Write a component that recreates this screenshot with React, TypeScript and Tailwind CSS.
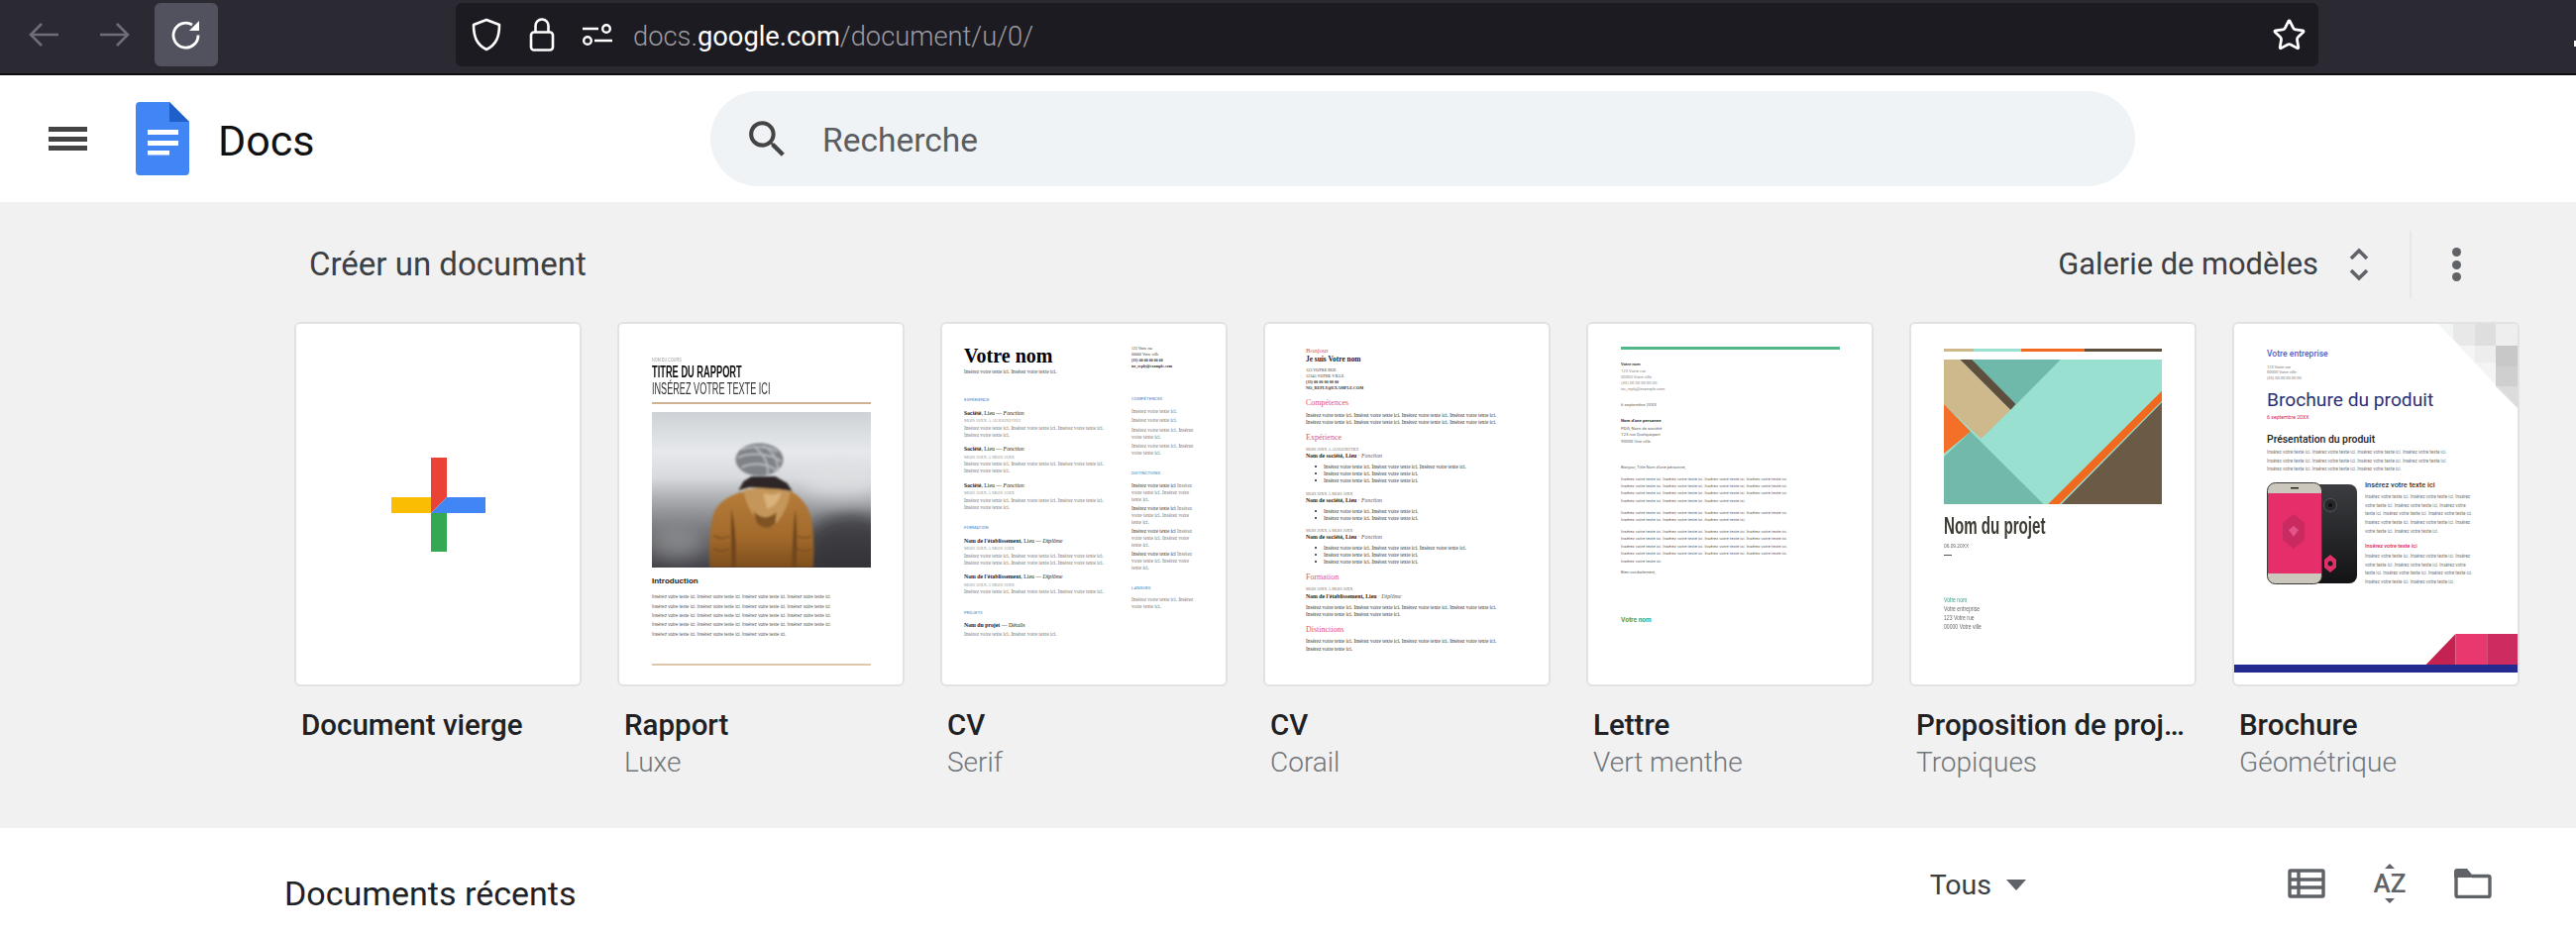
import React from "react";
import { Star } from "lucide-react";

const T = "Insérez votre texte ici. ";
const rep = (n: number) => T.repeat(n).trim();

function R({ c, children }: { c: string; children?: React.ReactNode }) {
  return <p className={`whitespace-nowrap ${c}`}>{children}</p>;
}

const serif = "[font-family:'Liberation_Serif',serif]";

const sBase = "h-[7px] leading-[7px] text-[5.2px] " + serif;
const sTxt = sBase + " text-[#777]";
const sHead = "h-[7px] leading-[7px] text-[4.4px] text-[#3d85c6] font-['Roboto']";
const sBold = "h-[7px] leading-[7px] text-[5.8px] text-[#222] " + serif;
const sDate = "h-[7px] leading-[7px] text-[4.4px] text-[#999] " + serif;

function Job({ a, b, c }: { a: string; b: string; c: string }) {
  return (
    <R c={`${sBold} ${c}`}>
      <b>{a}</b>, Lieu — <i>{b}</i>
    </R>
  );
}

function CvSerif() {
  return (
    <div className="flex pl-[22px] pt-[20px]">
      <div className="w-[143px] shrink-0">
        <R c={`h-[24px] text-[20px] leading-[24px] font-bold text-black ${serif}`}>Votre nom</R>
        <R c={`${sBase} mt-[1px] text-[#444]`}>Insérez votre texte ici. Insérez votre texte ici.</R>
        <R c={`${sHead} mt-[21px]`}>EXPÉRIENCE</R>
        <Job a="Société" b="Fonction" c="mt-[7px]" />
        <R c={sDate}>MOIS 20XX À AUJOURD'HUI</R>
        <R c={`${sTxt} mt-[1px]`}>{rep(3)}</R>
        <R c={sTxt}>Insérez votre texte ici.</R>
        <Job a="Société" b="Fonction" c="mt-[7px]" />
        <R c={`${sDate} mt-[1px]`}>MOIS 20XX À MOIS 20XX</R>
        <R c={sTxt}>{rep(3)}</R>
        <R c={sTxt}>Insérez votre texte ici.</R>
        <Job a="Société" b="Fonction" c="mt-[8px]" />
        <R c={sDate}>MOIS 20XX À MOIS 20XX</R>
        <R c={`${sTxt} mt-[1px]`}>{rep(3)}</R>
        <R c={sTxt}>Insérez votre texte ici.</R>
        <R c={`${sHead} mt-[13px]`}>FORMATION</R>
        <Job a="Nom de l'établissement" b="Diplôme" c="mt-[7px]" />
        <R c={sDate}>MOIS 20XX À MOIS 20XX</R>
        <R c={`${sTxt} mt-[1px]`}>{rep(3)}</R>
        <R c={sTxt}>{rep(3)}</R>
        <Job a="Nom de l'établissement" b="Diplôme" c="mt-[7px]" />
        <R c={`${sDate} mt-[1px]`}>MOIS 20XX À MOIS 20XX</R>
        <R c={sTxt}>{rep(3)}</R>
        <R c={`${sHead} mt-[14px]`}>PROJETS</R>
        <R c={`${sBold} mt-[6px]`}>
          <b>Nom du projet</b> — Détails
        </R>
        <R c={`${sTxt} mt-[2px]`}>{rep(2)}</R>
      </div>
      <div className="ml-[26px] w-[70px] shrink-0 overflow-hidden">
        <div className={`mt-[2px] text-[4px] leading-[6px] text-[#333] ${serif}`}>
          <p>123 Votre rue</p>
          <p>00000 Votre ville</p>
          <p className="font-bold">(33) 00 00 00 00 00</p>
          <p className="font-bold">no_reply@example.com</p>
        </div>
        <R c={`${sHead} mt-[26px]`}>COMPÉTENCES</R>
        <R c={`${sTxt} mt-[6px]`}>Insérez votre texte ici.</R>
        <R c={`${sTxt} mt-[2px]`}>Insérez votre texte ici.</R>
        <R c={`${sTxt} mt-[3px]`}>Insérez votre texte ici. Insérez</R>
        <R c={sTxt}>votre texte ici.</R>
        <R c={`${sTxt} mt-[2px]`}>Insérez votre texte ici. Insérez</R>
        <R c={sTxt}>votre texte ici.</R>
        <R c={`${sHead} mt-[13px]`}>DISTINCTIONS</R>
        <R c={`${sTxt} mt-[6px]`}><span className="text-[#333]">Insérez votre texte ici</span> Insérez</R>
        <R c={sTxt}>votre texte ici. Insérez votre</R>
        <R c={sTxt}>texte ici.</R>
        <R c={`${sTxt} mt-[2px]`}><span className="text-[#333]">Insérez votre texte ici</span> Insérez</R>
        <R c={sTxt}>votre texte ici. Insérez votre</R>
        <R c={sTxt}>texte ici.</R>
        <R c={`${sTxt} mt-[2px]`}><span className="text-[#333]">Insérez votre texte ici</span> Insérez</R>
        <R c={sTxt}>votre texte ici. Insérez votre</R>
        <R c={sTxt}>texte ici.</R>
        <R c={`${sTxt} mt-[2px]`}><span className="text-[#333]">Insérez votre texte ici</span> Insérez</R>
        <R c={sTxt}>votre texte ici. Insérez votre</R>
        <R c={sTxt}>texte ici.</R>
        <R c={`${sHead} mt-[13px]`}>LANGUES</R>
        <R c={`${sTxt} mt-[5px]`}>Insérez votre texte ici. Insérez</R>
        <R c={sTxt}>votre texte ici.</R>
      </div>
    </div>
  );
}

const cH = `h-[8px] text-[8px] leading-[8px] text-[#e0566f] ${serif}`;
const cT = `h-[7px] text-[5.3px] leading-[7px] text-[#333] ${serif}`;
const cB = `h-[7px] text-[5.8px] leading-[7px] text-[#222] ${serif}`;
const cD = `h-[7px] text-[4.1px] leading-[7px] text-[#777] ${serif}`;
const cL = `flex h-[7px] items-center text-[5.3px] leading-[7px] text-[#333] ${serif}`;

function Bul({ n, c }: { n: number; c?: string }) {
  return (
    <div className={`${cL} whitespace-nowrap ${c ?? ""}`}>
      <span className="mr-[7px] ml-[9px] size-[2px] rounded-full bg-[#222]" />
      {rep(n)}
    </div>
  );
}

function Soc({ title, c }: { title: string; c?: string }) {
  return (
    <R c={`${cB} ${c ?? ""}`}>
      <b>{title}, Lieu</b> <span className="text-[#777]">·</span> <i className="text-[#555]">Fonction</i>
    </R>
  );
}

function CvCorail() {
  return (
    <div className="pt-[24px] pl-[41px]">
      <R c={`h-[7px] text-[7px] leading-[7px] text-[#e0566f] ${serif}`}>Bonjour</R>
      <R c={`mt-[1px] h-[7px] text-[7.4px] leading-[7px] font-bold text-[#222] ${serif}`}>Je suis Votre nom</R>
      <div className={`mt-[5px] text-[4.2px] leading-[6px] text-[#333] ${serif}`}>
        <p>123 VOTRE RUE</p>
        <p>12345 VOTRE VILLE</p>
        <p className="font-bold">(33) 00 00 00 00 00</p>
        <p className="font-bold">NO_REPLY@EXAMPLE.COM</p>
      </div>
      <R c={`${cH} mt-[8px]`}>Compétences</R>
      <R c={`${cT} mt-[4.5px]`}>{rep(4)}</R>
      <R c={cT}>{rep(4)}</R>
      <R c={`${cH} mt-[8.5px]`}>Expérience</R>
      <R c={`${cD} mt-[3.5px]`}>MOIS 20XX À AUJOURD'HUI</R>
      <Soc title="Nom de société" />
      <Bul n={3} c="mt-[4px]" />
      <Bul n={2} />
      <Bul n={2} />
      <R c={`${cD} mt-[6px]`}>MOIS 20XX À MOIS 20XX</R>
      <Soc title="Nom de société" />
      <Bul n={2} c="mt-[4px]" />
      <Bul n={2} />
      <R c={`${cD} mt-[5px]`}>MOIS 20XX À MOIS 20XX</R>
      <Soc title="Nom de société" />
      <Bul n={3} c="mt-[4px]" />
      <Bul n={2} />
      <Bul n={2} />
      <R c={`${cH} mt-[8.5px]`}>Formation</R>
      <R c={`${cD} mt-[3.5px]`}>MOIS 20XX À MOIS 20XX</R>
      <R c={`${cB} mt-[1px]`}>
        <b>Nom de l'établissement, Lieu</b> <span className="text-[#777]">·</span> <i className="text-[#555]">Diplôme</i>
      </R>
      <R c={`${cT} mt-[4px]`}>{rep(4)}</R>
      <R c={cT}>{rep(2)}</R>
      <R c={`${cH} mt-[8.5px]`}>Distinctions</R>
      <R c={`${cT} mt-[3.5px]`}>{rep(4)}</R>
      <R c={`${cT} mt-[1px]`}>Insérez votre texte ici.</R>
    </div>
  );
}

const lS0 = "h-[6px] text-[4.2px] leading-[6px] font-['Roboto']";
const lS = lS0 + " text-[#888]";
const lD0 = "h-[6px] text-[4.4px] leading-[6px] font-['Roboto']";
const lD = lD0 + " text-[#666]";
const lT = "h-[7px] text-[4.25px] leading-[7px] text-[#666] font-['Roboto']";

function Lettre() {
  return (
    <div className="pt-[23px] pl-[33px]">
      <div className="h-[3px] w-[221px] bg-[#52b788]" />
      <R c={`${lS0} mt-[12px] font-bold text-[#444]`}>Votre nom</R>
      <R c={`${lS} mt-[1px]`}>123 Votre rue</R>
      <R c={lS}>00000 Votre ville</R>
      <R c={lS}>(33) 00 00 00 00 00</R>
      <R c={lS}>no_reply@example.com</R>
      <R c={`${lD} mt-[10px]`}>6 septembre 20XX</R>
      <R c={`${lD0} mt-[10px] font-bold text-[#333]`}>Nom d'une personne</R>
      <R c={`${lD} mt-[2px]`}>PDG, Nom de société</R>
      <R c={lD}>123 rue Quelquepart</R>
      <R c={`${lD} mt-[1px]`}>90000 Une ville</R>
      <R c={`${lT} mt-[18.5px]`}>Bonjour, Title Nom d'une personne,</R>
      <R c={`${lT} mt-[5px]`}>{rep(4)}</R>
      <R c={lT}>{rep(4)}</R>
      <R c={lT}>{rep(4)}</R>
      <R c={`${lT} mt-[1px]`}>{rep(3)}</R>
      <R c={`${lT} mt-[5px]`}>{rep(4)}</R>
      <R c={lT}>{rep(3)}</R>
      <R c={`${lT} mt-[5px]`}>{rep(4)}</R>
      <R c={lT}>{rep(4)}</R>
      <R c={`${lT} mt-[1px]`}>{rep(4)}</R>
      <R c={lT}>{rep(4)}</R>
      <R c={`${lT} mt-[1px]`}>Insérez votre texte ici.</R>
      <R c={`${lT} mt-[4px]`}>Bien cordialement,</R>
      <R c="mt-[41.5px] h-[8px] text-[6.6px] leading-[8px] font-bold text-[#34a876] font-['Roboto']">Votre nom</R>
    </div>
  );
}

function Photo() {
  return (
    <svg viewBox="0 0 220 157" className="mt-[8px] block h-[157px] w-[221px]" preserveAspectRatio="none">
      <defs>
        <linearGradient id="sky" x1="0" y1="0" x2="0" y2="1">
          <stop offset="0" stopColor="#cdd2d6" />
          <stop offset="0.25" stopColor="#e6e8eb" />
          <stop offset="0.42" stopColor="#d8dadd" />
          <stop offset="0.55" stopColor="#aeb0b4" />
          <stop offset="0.75" stopColor="#77787c" />
          <stop offset="1" stopColor="#404046" />
        </linearGradient>
        <linearGradient id="coat" x1="0" y1="0" x2="0" y2="1">
          <stop offset="0" stopColor="#b57c3a" />
          <stop offset="0.6" stopColor="#a26a2b" />
          <stop offset="1" stopColor="#7e4e1d" />
        </linearGradient>
        <filter id="soft"><feGaussianBlur stdDeviation="0.9" /></filter>
        <filter id="haze"><feGaussianBlur stdDeviation="9" /></filter>
      </defs>
      <rect width="220" height="157" fill="url(#sky)" />
      <g filter="url(#haze)">
        <ellipse cx="200" cy="140" rx="50" ry="38" fill="#2d2d33" opacity="0.75" />
        <ellipse cx="25" cy="132" rx="26" ry="16" fill="#9a9b9d" opacity="0.6" />
        <ellipse cx="190" cy="70" rx="40" ry="14" fill="#dfe1e4" opacity="0.8" />
      </g>
      <g filter="url(#soft)">
        <path d="M58 157 C57 135 58 112 63 100 C68 90 78 85 88 81 L140 80 C150 86 158 96 160 107 C163 125 163 142 162 157 Z" fill="url(#coat)" />
        <path d="M92 79 C105 76 128 76 139 80 C138 92 132 104 125 112 C118 116 112 116 106 110 C100 102 94 92 92 79 Z" fill="#c5965a" />
        <path d="M102 100 C109 108 118 108 125 101 L124 112 C118 119 110 118 105 111 Z" fill="#7f5324" />
        <path d="M112 82 C118 84 124 84 130 81 C128 90 122 96 116 98 C114 92 113 87 112 82 Z" fill="#d9b27b" />
        <path d="M80 98 C79 118 80 140 80 157 H84 C85 138 84 116 80 98 Z M144 98 C146 118 146 140 145 157 H141 C141 138 142 116 144 98 Z" fill="#6e451b" />
        <path d="M62 125 C68 128 74 128 78 125 M62 138 C68 141 74 141 78 138 M146 125 C150 128 156 128 160 125 M146 138 C150 141 156 141 160 138" stroke="#7a4c1e" strokeWidth="1.500" fill="none" />
        <path d="M87 79 L92 70 L100 65 H124 L136 72 L141 80 L128 78 L112 77 L98 76 Z" fill="#2d2825" />
        <ellipse cx="108" cy="48" rx="24" ry="16.500" fill="#7f8388" />
        <path d="M90 38 C100 34 118 34 126 40 M86 46 C100 40 120 42 130 50 M90 56 C102 50 118 52 126 60 M112 34 C122 40 128 50 126 60 M102 34 C112 42 118 52 116 63" stroke="#b6b9bd" strokeWidth="1.800" fill="none" />
      </g>
    </svg>
  );
}

function Rapport() {
  return (
    <div className="pt-[33.5px] pl-[33px]">
      <R c="h-[5px] origin-left scale-x-[0.75] text-[5px] leading-[5px] text-[#999] [font-family:'Liberation_Sans',sans-serif]">NOM DU COURS</R>
      <R c="mt-[3.5px] h-[14px] w-[221px] origin-left scale-x-[0.58] text-[16px] leading-[14px] font-bold text-[#111] [font-family:'Liberation_Sans',sans-serif]">TITRE DU RAPPORT</R>
      <R c="mt-[2px] h-[16px] w-[221px] origin-left scale-x-[0.57] text-[16px] leading-[16px] text-[#333] [font-family:'Liberation_Sans',sans-serif]">INSÉREZ VOTRE TEXTE ICI</R>
      <div className="mt-[5px] h-[2px] w-[221px] bg-[#cdb294]" />
      <Photo />
      <R c="mt-[9px] h-[10px] text-[8px] leading-[10px] font-bold text-[#222] [font-family:'Liberation_Sans',sans-serif]">Introduction</R>
      <div className="mt-[6.4px] text-[4.55px] leading-[9.3px] whitespace-nowrap text-[#555] [font-family:'Liberation_Sans',sans-serif]">
        <p>{rep(4)}</p>
        <p>{rep(4)}</p>
        <p>{rep(4)}</p>
        <p>{rep(4)}</p>
        <p>{rep(3)}</p>
      </div>
      <div className="mt-[25px] h-[2px] w-[221px] bg-[#dfc7ab]" />
    </div>
  );
}

function Tropic() {
  return (
    <svg viewBox="0 0 220 146" className="mt-[8px] block h-[146px] w-[220px]">
      <rect width="220" height="146" fill="#99e0d0" />
      <polygon points="28.200,0 117.800,0 68.200,50" fill="#6fb9ab" />
      <polygon points="0,0 16.400,0 67.300,50.700 66,52 37.500,80 0,45" fill="#cdb98c" />
      <polygon points="16.400,0 28.200,0 72.400,45 67.300,50.700" fill="#5d4e3e" />
      <polygon points="0,45 27,72.700 0,95" fill="#f47029" />
      <polygon points="0,98.300 27,72.700 100.600,146 0,146" fill="#72b9aa" />
      <polygon points="220,31.700 220,41.700 116.600,146 105.200,146" fill="#f0691f" />
      <polygon points="220,43.300 220,146 118.700,146" fill="#6b5a45" />
    </svg>
  );
}

const pS0 = "h-[8px] origin-left scale-x-[0.8] text-[6.4px] leading-[8px] [font-family:'Liberation_Sans',sans-serif]";
const pS = pS0 + " text-[#666]";

function Proposition() {
  return (
    <div className="pt-[25px] pl-[33px]">
      <div className="flex h-[3px] w-[220px]">
        <div className="w-[30px] bg-[#cdb98c]" />
        <div className="w-[48px] bg-[#99e0d0]" />
        <div className="w-[64px] bg-[#f0691f]" />
        <div className="w-[78px] bg-[#5d4e3e]" />
      </div>
      <Tropic />
      <R c="mt-[7px] h-[30px] origin-left scale-x-[0.63] text-[24px] leading-[30px] font-bold text-[#3d3a33] [font-family:'Liberation_Sans',sans-serif]">Nom du projet</R>
      <R c="mt-[1.5px] h-[7px] origin-left scale-x-[0.8] text-[6px] leading-[7px] text-[#666] [font-family:'Liberation_Sans',sans-serif]">06.09.20XX</R>
      <div className="mt-[5px] h-[1px] w-[8px] bg-[#555]" />
      <R c={`${pS0} mt-[41.5px] text-[#36a28e]`}>Votre nom</R>
      <R c={`${pS} mt-[1px]`}>Votre entreprise</R>
      <R c={`${pS} mt-[1px]`}>123 Votre rue</R>
      <R c={`${pS} mt-[1px]`}>00000 Votre ville</R>
    </div>
  );
}

function Phones() {
  return (
    <svg viewBox="0 0 91 103" className="block h-[103px] w-[91px] shrink-0">
      <defs>
        <linearGradient id="ph" x1="0" y1="0" x2="0" y2="1">
          <stop offset="0" stopColor="#3b3d40" />
          <stop offset="1" stopColor="#131315" />
        </linearGradient>
      </defs>
      <rect x="44" y="2" width="47" height="100" rx="8" fill="url(#ph)" />
      <circle cx="64" cy="23" r="6.500" fill="#26282a" stroke="#55575a" strokeWidth="1" />
      <circle cx="64" cy="23" r="2" fill="#0c0c0c" />
      <polygon points="64,73 70,78 70,86 64,91 58,86 58,78" fill="#e12f6a" />
      <circle cx="64" cy="82" r="2.500" fill="#1c1c1e" />
      <rect x="0.500" y="0.500" width="55" height="102" rx="8" fill="#cbc7bc" stroke="#3a3a38" />
      <rect x="1" y="11" width="54" height="81" fill="#e62e6b" />
      <rect x="24" y="5" width="8" height="1.500" fill="#222" />
      <polygon points="27,32 38,41 38,58 27,67 16,58 16,41" fill="#c92a60" />
      <polygon points="27,44 32,48 27,55 22,48" fill="#e2548a" />
    </svg>
  );
}

const bT = "h-[8.6px] text-[4.6px] leading-[8.6px] text-[#777] font-['Roboto']";

function Brochure() {
  return (
    <div className="relative h-full pt-[24.5px] pl-[33px]">
      <svg viewBox="0 0 80 86" className="absolute top-0 right-0 h-[86px] w-[80px]">
        <polygon points="0,0 80,0 80,85" fill="#f3f4f4" />
        <rect x="15" y="0" width="22" height="15" fill="#e8e8e8" />
        <polygon points="15,15 37,15 37,22 22,22" fill="#e8e8e8" />
        <rect x="37" y="0" width="21" height="22" fill="#dedede" />
        <rect x="58" y="0" width="22" height="22" fill="#eeeeee" />
        <rect x="37" y="22" width="21" height="17" fill="#ededed" />
        <rect x="58" y="22" width="22" height="21" fill="#c8c8c8" />
        <rect x="58" y="43" width="22" height="20" fill="#cfcfcf" />
        <polygon points="58,63 80,63 80,85" fill="#dcdcdc" />
      </svg>
      <R c="h-[11px] text-[8.6px] leading-[11px] font-medium text-[#5c5bc4] font-['Roboto']">Votre entreprise</R>
      <div className="mt-[5px] text-[4px] leading-[5.5px] text-[#777] font-['Roboto']">
        <p>123 Votre rue</p>
        <p>00000 Votre ville</p>
        <p>(33) 00 00 00 00 00</p>
      </div>
      <R c="mt-[7.5px] h-[24px] text-[19.2px] leading-[24px] text-[#2b3175] font-['Roboto']">Brochure du produit</R>
      <R c="mt-[1px] h-[8px] text-[5.2px] leading-[8px] text-[#d81b60] font-['Roboto']">6 septembre 20XX</R>
      <R c="mt-[12px] h-[14px] text-[10.4px] leading-[14px] font-medium text-[#222] font-['Roboto']">Présentation du produit</R>
      <div className="mt-[2.7px]">
        <R c={bT}>{rep(4)}</R>
        <R c={bT}>{rep(4)}</R>
        <R c={bT}>{rep(3)}</R>
      </div>
      <div className="mt-[8.5px] flex">
        <Phones />
        <div className="ml-[8px]">
          <R c="h-[6px] text-[7.4px] leading-[6px] font-medium text-[#333] font-['Roboto']">Insérez votre texte ici</R>
          <div className="mt-[4.7px]">
            <R c={bT}>Insérez votre texte ici. Insérez votre texte ici. Insérez</R>
            <R c={bT}>votre texte ici. Insérez votre texte ici. Insérez votre</R>
            <R c={bT}>texte ici. Insérez votre texte ici. Insérez votre texte ici.</R>
            <R c={bT}>Insérez votre texte ici. Insérez votre texte ici. Insérez</R>
            <R c={bT}>votre texte ici. Insérez votre texte ici.</R>
          </div>
          <R c="mt-[6.3px] h-[8px] text-[5.5px] leading-[8px] font-medium text-[#d81b60] font-['Roboto']">Insérez votre texte ici</R>
          <div className="mt-[2.7px]">
            <R c={bT}>Insérez votre texte ici. Insérez votre texte ici. Insérez</R>
            <R c={bT}>votre texte ici. Insérez votre texte ici. Insérez votre</R>
            <R c={bT}>texte ici. Insérez votre texte ici. Insérez votre texte ici.</R>
            <R c={bT}>Insérez votre texte ici. Insérez votre texte ici.</R>
          </div>
        </div>
      </div>
      <svg viewBox="0 0 288 39" className="absolute right-0 bottom-[12px] left-0 block h-[39px] w-[286px]" preserveAspectRatio="none">
        <polygon points="195,31 225,0 225,31" fill="#c42250" />
        <rect x="225" y="0" width="32" height="31" fill="#e8386e" />
        <rect x="257" y="0" width="31" height="31" fill="#cc2c60" />
        <rect x="0" y="31" width="288" height="8" fill="#252a8f" />
      </svg>
    </div>
  );
}

function Plus() {
  return (
    <div className="flex h-full items-center justify-center">
      <svg viewBox="0 0 95 95" className="block h-[95px] w-[95px]">
        <polygon points="0,40 40,40 40,56 0,56" fill="#fbbc04" />
        <polygon points="40,56 56,56 56,95 40,95" fill="#34a853" />
        <polygon points="40,0 56,0 56,40 40,56" fill="#ea4335" />
        <polygon points="56,40 95,40 95,56 40,56" fill="#4285f4" />
      </svg>
    </div>
  );
}

const templates: { t: string; s?: string; C: () => React.ReactElement }[] = [
  { t: "Document vierge", C: Plus },
  { t: "Rapport", s: "Luxe", C: Rapport },
  { t: "CV", s: "Serif", C: CvSerif },
  { t: "CV", s: "Corail", C: CvCorail },
  { t: "Lettre", s: "Vert menthe", C: Lettre },
  { t: "Proposition de projet", s: "Tropiques", C: Proposition },
  { t: "Brochure", s: "Géométrique", C: Brochure },
];

function Topbar() {
  return (
    <div className="flex h-[76px] items-start border-b-2 border-[#0e0d12] bg-[#2b2a33]">
      <svg viewBox="0 0 32 26" fill="none" stroke="#6f6e76" strokeWidth="2.600" className="mt-[22px] ml-[28px] h-[26px] w-[32px]">
        <path d="M31 13H3M14 2 3 13l11 11" />
      </svg>
      <svg viewBox="0 0 32 26" fill="none" stroke="#6f6e76" strokeWidth="2.600" className="mt-[22px] ml-[40px] h-[26px] w-[32px]">
        <path d="M1 13h28M18 2l11 11-11 11" />
      </svg>
      <div className="mt-[3px] ml-[24px] flex h-[64px] w-[64px] items-center justify-center rounded-[6px] bg-[#52525e]">
        <svg viewBox="0 0 32 30" fill="none" className="h-[30px] w-[32px]">
          <path d="M22 5A12.500 12.500 0 1 0 28 15.500" stroke="#fff" strokeWidth="2.800" />
          <polygon points="29,1 29,11 19,11" fill="#fff" />
        </svg>
      </div>
      <div className="mt-[3px] ml-[240px] flex h-[64px] w-[1880px] items-center rounded-[6px] bg-[#1c1b22] pl-[16px]">
        <svg viewBox="0 0 30 34" fill="none" stroke="#fff" strokeWidth="2.600" className="h-[34px] w-[30px] shrink-0">
          <path d="M15 2 28 7C28 19 25 27 15 32 5 27 2 19 2 7Z" strokeLinejoin="round" />
        </svg>
        <svg viewBox="0 0 26 34" fill="none" stroke="#fff" strokeWidth="2.600" className="ml-[28px] h-[34px] w-[26px] shrink-0">
          <rect x="2" y="14.500" width="22" height="18" rx="3" />
          <path d="M6.500 14.500V8a6.500 6.500 0 0 1 13 0v6.500" />
        </svg>
        <svg viewBox="0 0 32 22" fill="none" stroke="#fff" strokeWidth="2.400" className="ml-[27px] h-[22px] w-[32px] shrink-0">
          <path d="M1 5h16M13 17h18" />
          <circle cx="25" cy="5" r="3.800" />
          <circle cx="6" cy="17" r="3.800" />
        </svg>
        <div className="ml-[20px] pt-[3px] text-[27.3px] leading-[36px] font-light whitespace-nowrap text-[#9c9ba1] font-['Roboto']">
          docs.<span className="font-normal text-white">google.com</span>/document/u/0/
        </div>
        <Star size={35} strokeWidth={1.9} color="#fff" className="mr-[12px] ml-auto" />
      </div>
      <div className="mt-[41px] ml-auto h-[6px] w-[2px] bg-[#fff]" />
    </div>
  );
}

function Header() {
  return (
    <div className="flex h-[128px] items-center bg-white">
      <div className="flex w-[717px] shrink-0 items-center pl-[49px]">
        <div className="flex h-[24px] w-[39px] flex-col justify-between">
          <div className="h-[5px] bg-[#444]" />
          <div className="h-[5px] bg-[#444]" />
          <div className="h-[5px] bg-[#444]" />
        </div>
        <svg viewBox="0 0 54 74" className="ml-[49px] h-[74px] w-[54px]">
          <path d="M4 0H34L54 20V70a4 4 0 0 1-4 4H4a4 4 0 0 1-4-4V4a4 4 0 0 1 4-4Z" fill="#4285f4" />
          <path d="M34 0 54 20H34Z" fill="#1f5fc9" />
          <rect x="12" y="28" width="31" height="5" fill="#fff" />
          <rect x="12" y="39" width="31" height="5" fill="#fff" />
          <rect x="12" y="49" width="22" height="4.500" fill="#fff" />
        </svg>
        <span className="ml-[29px] pt-[4px] text-[43px] leading-[48px] text-[#111] font-['Roboto']">Docs</span>
      </div>
      <div className="flex h-[96px] w-[1438px] items-center rounded-[48px] bg-[#f0f3f5] pl-[33px]">
        <svg viewBox="0 0 24 24" fill="#444" className="h-[49px] w-[49px] shrink-0">
          <path d="M15.500 14h-.79l-.28-.27C15.410 12.590 16 11.110 16 9.500 16 5.910 13.090 3 9.500 3S3 5.910 3 9.500 5.910 16 9.500 16c1.610 0 3.090-.59 4.230-1.570l.27.28v.79l5 4.990L20.490 19l-4.990-5zm-6 0C7.010 14 5 11.990 5 9.500S7.010 5 9.500 5 14 7.010 14 9.500 11.990 14 9.500 14z" />
        </svg>
        <span className="ml-[31px] pt-[4px] text-[33.5px] leading-[40px] text-[#5a5d61] font-['Roboto']">Recherche</span>
      </div>
    </div>
  );
}

function Gallery() {
  return (
    <section className="h-[632px] bg-[#f1f1f2] pt-[33px]">
      <div className="flex h-[60px] items-center pr-[116px] pl-[312px]">
        <h2 className="text-[33px] text-[#3c4043] font-['Roboto']">Créer un document</h2>
        <span className="ml-auto text-[30.8px] text-[#3c4043] font-['Roboto']">Galerie de modèles</span>
        <svg viewBox="0 0 22 34" fill="none" stroke="#5f6368" strokeWidth="3.600" className="ml-[30px] h-[34px] w-[22px]">
          <path d="M3 11 11 3l8 8M3 23l8 8 8-8" />
        </svg>
        <div className="ml-[40px] h-[68px] w-[2px] bg-[#e6e7e9]" />
        <div className="ml-[41px] flex h-[34px] flex-col justify-between">
          <div className="size-[9px] rounded-full bg-[#5f6368]" />
          <div className="size-[9px] rounded-full bg-[#5f6368]" />
          <div className="size-[9px] rounded-full bg-[#5f6368]" />
        </div>
      </div>
      <div className="mt-[28px] flex gap-[36px] pl-[297px]">
        {templates.map(({ t, s, C }, i) => (
          <div key={i} className="w-[290px] shrink-0">
            <div className="relative h-[368px] overflow-hidden rounded-[6px] border-2 border-[#e1e2e4] bg-white">
              <C />
            </div>
            <div className="mt-[21px] truncate pr-[12px] pl-[7px] text-[29.5px] leading-[36px] font-medium text-[#202124] font-['Roboto']">{t}</div>
            {s && <div className="mt-[2px] pl-[7px] text-[28px] leading-[36px] font-light text-[#70757a] font-['Roboto']">{s}</div>}
          </div>
        ))}
      </div>
    </section>
  );
}

function Recent() {
  return (
    <div className="flex h-[108px] items-start bg-white pr-[85px] pl-[287px]">
      <h2 className="mt-[46px] text-[34px] leading-[40px] text-[#202124] font-['Roboto']">Documents récents</h2>
      <div className="mt-[36px] ml-auto flex h-[40px] items-center">
        <span className="pt-[4px] text-[28.500px] leading-[36px] text-[#3c4043] font-['Roboto']">Tous</span>
        <svg viewBox="0 0 20 11" className="mt-[2px] ml-[15px] h-[11px] w-[20px]">
          <polygon points="0,0 20,0 10,11" fill="#5f6368" />
        </svg>
        <svg viewBox="0 0 38 30" fill="none" stroke="#5f6368" strokeWidth="3.400" className="ml-[264px] h-[30px] w-[38px]">
          <rect x="2" y="2" width="34" height="26" rx="1" />
          <path d="M11 2v26M2 11h34M2 19h34" />
        </svg>
        <div className="ml-[45px] flex h-[40px] w-[40px] flex-col items-center justify-between">
          <svg viewBox="0 0 10 5" className="h-[5px] w-[10px]"><polygon points="5,0 10,5 0,5" fill="#5f6368" /></svg>
          <span className="text-[26px] leading-[22px] font-medium text-[#5f6368] font-['Roboto']">AZ</span>
          <svg viewBox="0 0 10 5" className="h-[5px] w-[10px]"><polygon points="0,0 10,0 5,5" fill="#5f6368" /></svg>
        </div>
        <svg viewBox="0 0 38 30" fill="none" className="ml-[45px] h-[30px] w-[38px]">
          <path d="M2 6V27a1.500 1.500 0 0 0 1.500 1.500h31A1.500 1.500 0 0 0 36 27V9a1.500 1.500 0 0 0-1.500-1.500H18" stroke="#5f6368" strokeWidth="3.400" />
          <path d="M0 3a3 3 0 0 1 3-3h10l5 6h18v3H0Z" fill="#5f6368" />
        </svg>
      </div>
    </div>
  );
}

export default function App() {
  return (
    <div className="h-[944px] w-[2600px] overflow-hidden bg-white font-['Roboto']">
      <Topbar />
      <Header />
      <Gallery />
      <Recent />
    </div>
  );
}
